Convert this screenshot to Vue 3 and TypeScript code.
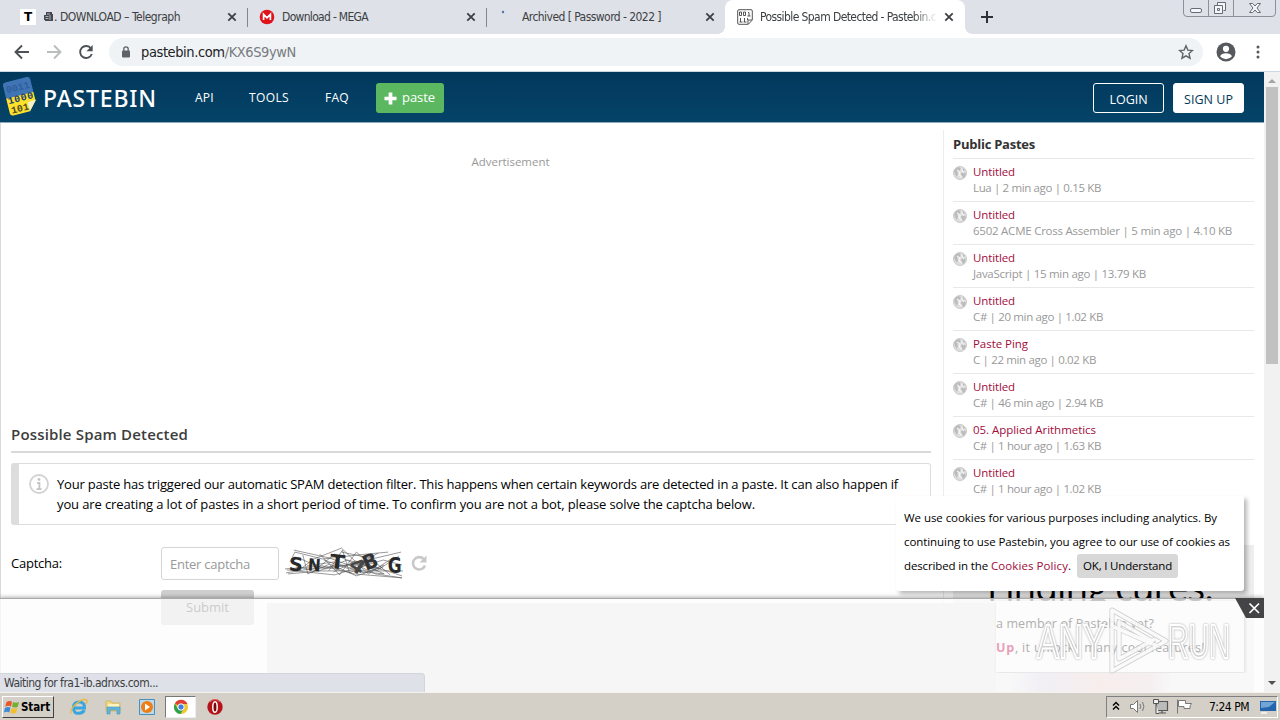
<script setup lang="ts">
interface Tab {
  kind: 'telegraph' | 'mega' | 'loading' | 'pastebin'
  title: string
  width: number
}

interface Paste {
  title: string
  titleWidth: number
  meta: string
  metaWidth: number
}

const tabs: Tab[] = [
  { kind: 'telegraph', title: '. DOWNLOAD – Telegraph', width: 126 },
  { kind: 'mega', title: 'Download - MEGA', width: 86 },
  { kind: 'loading', title: 'Archived [ Password - 2022 ]', width: 139 },
  { kind: 'pastebin', title: 'Possible Spam Detected - Pastebin.c', width: 176 },
]

const pastes: Paste[] = [
  { title: 'Untitled', titleWidth: 42, meta: 'Lua | 2 min ago | 0.15 KB', metaWidth: 128 },
  { title: 'Untitled', titleWidth: 42, meta: '6502 ACME Cross Assembler | 5 min ago | 4.10 KB', metaWidth: 259 },
  { title: 'Untitled', titleWidth: 42, meta: 'JavaScript | 15 min ago | 13.79 KB', metaWidth: 173 },
  { title: 'Untitled', titleWidth: 42, meta: 'C# | 20 min ago | 1.02 KB', metaWidth: 130 },
  { title: 'Paste Ping', titleWidth: 55, meta: 'C | 22 min ago | 0.02 KB', metaWidth: 123 },
  { title: 'Untitled', titleWidth: 42, meta: 'C# | 46 min ago | 2.94 KB', metaWidth: 130 },
  { title: '05. Applied Arithmetics', titleWidth: 123, meta: 'C# | 1 hour ago | 1.63 KB', metaWidth: 128 },
  { title: 'Untitled', titleWidth: 42, meta: 'C# | 1 hour ago | 1.02 KB', metaWidth: 128 },
]

// Tracks a single-line label so that it fills the given width.
const vFit = {
  mounted(el: HTMLElement, binding: { value: number }) {
    const count = (el.textContent ?? '').length
    const natural = el.getBoundingClientRect().width
    if (count > 0) el.style.letterSpacing = `${(binding.value - natural) / count}px`
  },
}
</script>

<template>
  <div class="screen">
    <div class="tabstrip">
      <div v-for="tab in tabs" :key="tab.kind" class="tab" :class="tab.kind">
        <span v-if="tab.kind === 'telegraph'" class="fav-t">T</span>
        <svg v-else-if="tab.kind === 'mega'" class="fav" viewBox="0 0 16 16">
          <circle cx="8" cy="8" r="7.3" fill="#e0131c" />
          <path d="M4.6 11V5.4L8 8.8l3.4-3.4V11" fill="none" stroke="#fff" stroke-width="1.7" />
        </svg>
        <svg v-else-if="tab.kind === 'loading'" class="fav" viewBox="0 0 16 16">
          <circle cx="8" cy="2" r="1.2" fill="#5571a8" />
        </svg>
        <svg v-else class="fav" viewBox="0 0 16 16">
          <path d="M2 .7h12q1.3 0 1.3 1.3v9l-4 4.3H2Q.7 15.3.7 14V2Q.7.7 2 .7ZM15 11h-4v4" fill="#fff" stroke="#555" stroke-width="1" />
          <path d="M2.5 3h2v3.500h-2zM6.500 3h2v3.500h-2zM11 3.500h1v3.500M10.500 7h3M3.500 9v4M2.500 13h3M7.500 9v4M6.500 13h3M10.500 9v2" fill="none" stroke="#444" stroke-width=".9" />
        </svg>
        <svg v-if="tab.kind === 'telegraph'" class="mini" viewBox="0 0 10 10">
          <path d="M2 0h6v2h1v7H1V8H0V3h2z" fill="#45494f" />
          <path d="M1.500 4.500h3M1.500 6.500h3M3 2h3M6 3v5" stroke="#c9cdd3" stroke-width=".8" />
        </svg>
        <span class="tab-title"><span v-fit="tab.width">{{ tab.title }}</span></span>
        <svg class="close" viewBox="0 0 10 10"><path d="M1.300 1.300l7.400 7.400M8.700 1.300L1.300 8.700" stroke="#3c4043" stroke-width="1.800" /></svg>
      </div>
      <svg class="new-tab" viewBox="0 0 12 12"><path d="M6 0v12M0 6h12" stroke="#2d3035" stroke-width="2" /></svg>
      <svg class="window-buttons" viewBox="0 0 94 18">
        <path d="M1.500 0v13q0 3.500 3.500 3.500h85q3.500 0 3.500-3.500V0M26.500 0v16.500M51.500 0v16.500" fill="none" stroke="#8b9099" />
        <rect x="8.500" y="8.500" width="11" height="4" rx="1.500" fill="#f5f6f8" stroke="#666b75" />
        <path d="M35.500 5.500v-3h8v8h-2M32.500 5.500h8v8h-8zM35.500 8.500h2v2h-2z" fill="#f5f6f8" stroke="#666b75" />
        <path d="M67.500 3.500h3.200L73 6l2.300-2.500h3.200L75 8l3.500 4.500h-3.200L73 10l-2.300 2.500h-3.200L71 8z" fill="#f5f6f8" stroke="#666b75" />
      </svg>
    </div>

    <div class="toolbar">
      <svg class="nav-icons" viewBox="0 0 100 37">
        <path d="M29 18H16M22 11.500L15.500 18l6.500 6.500" fill="none" stroke="#4d5156" stroke-width="1.900" />
        <path d="M47 18h13M54 11.500l6.500 6.500-6.500 6.500" fill="none" stroke="#babcbe" stroke-width="1.900" />
        <path d="M91 14.500A6 6 0 1 0 91.800 20" fill="none" stroke="#4d5156" stroke-width="1.900" />
        <path d="M92.700 11v6.300h-6.300z" fill="#4d5156" />
      </svg>
      <div class="address">
        <svg class="lock" viewBox="0 0 10 12"><rect x="1" y="4.500" width="8" height="7" rx="1" fill="#5f6368" /><path d="M2.800 5V3a2.200 2.200 0 0 1 4.400 0v2" fill="none" stroke="#5f6368" stroke-width="1.300" /></svg>
        <span v-fit="155" class="url">pastebin.com<span class="path">/KX6S9ywN</span></span>
        <svg class="star" viewBox="0 0 16 16"><path d="M8 1.800l1.850 4.300 4.650.4-3.500 3.100 1.050 4.600L8 11.800l-4.050 2.400L5 9.600 1.500 6.500l4.650-.4z" fill="none" stroke="#5f6368" stroke-width="1.400" /></svg>
      </div>
      <svg class="avatar" viewBox="0 0 20 20"><circle cx="10" cy="10" r="9.500" fill="#55585d" /><circle cx="10" cy="6.800" r="3.100" fill="#fff" /><path d="M4 14.300q1.500-3 6-3t6 3q-2.300 2.900-6 2.900t-6-2.900z" fill="#fff" /></svg>
      <svg class="kebab" viewBox="0 0 4 14"><circle cx="2" cy="2" r="1.500" /><circle cx="2" cy="7" r="1.500" /><circle cx="2" cy="12" r="1.500" /></svg>
    </div>

    <div class="viewport">
      <div class="page">
        <header class="site-header">
          <svg class="logo" viewBox="0 0 36 42">
            <g transform="rotate(-14 18 21)">
              <path d="M6 4h22q3 0 3 3v14H3V7q0-3 3-3z" fill="#3f74b5" />
              <path d="M3 20h28v9l-8 9H6q-3 0-3-3z" fill="#fde12d" />
              <path d="M31 29v-1l-8 1v9z" fill="#f4f1d2" />
              <text x="5" y="15" font-size="10" fill="#2f5f9c" textLength="24">0011</text>
              <text x="4" y="26" font-size="10" fill="#1d416d" textLength="26">1000</text>
              <text x="5" y="36" font-size="10" fill="#4f4c23" textLength="18">101</text>
            </g>
          </svg>
          <span class="brand"><span v-fit="114">PASTEBIN</span></span>
          <nav class="site-nav">
            <span class="api"><span v-fit="19">API</span></span>
            <span class="tools"><span v-fit="40">TOOLS</span></span>
            <span class="faq"><span v-fit="24">FAQ</span></span>
          </nav>
          <span class="paste-button">
            <svg viewBox="0 0 14 14"><path d="M7 .5v13M.5 7h13" stroke="#fff" stroke-width="4" /></svg>
            <span v-fit="33">paste</span>
          </span>
          <span class="account login"><span v-fit="38">LOGIN</span></span>
          <span class="account signup"><span v-fit="49">SIGN UP</span></span>
        </header>

        <div class="columns">
          <main class="content">
            <p class="ad-label"><span v-fit="78">Advertisement</span></p>
            <h1><span v-fit="177">Possible Spam Detected</span></h1>
            <div class="notice">
              <svg viewBox="0 0 20 20"><circle cx="10" cy="10" r="9" fill="none" stroke="#d2d2d2" stroke-width="1.800" /><circle cx="10" cy="5.500" r="1.400" fill="#c4c4c4" /><path d="M8 8.800h2.400v6M7.500 15.100h5" fill="none" stroke="#c4c4c4" stroke-width="1.800" /></svg>
              <div class="notice-text">
                <div><span v-fit="841">Your paste has triggered our automatic SPAM detection filter. This happens when certain keywords are detected in a paste. It can also happen if</span></div>
                <div><span v-fit="698">you are creating a lot of pastes in a short period of time. To confirm you are not a bot, please solve the captcha below.</span></div>
              </div>
            </div>
            <div class="captcha-row">
              <label><span v-fit="51">Captcha:</span></label>
              <div class="field"><span v-fit="80">Enter captcha</span></div>
              <svg class="captcha" viewBox="0 0 120 33">
                <g fill="none" stroke="#555" stroke-width=".6">
                  <path d="M0 22L38 19 70 27 118 31M1 26L25 22 62 18 117 5M5 15L10 5 38 12 72 8 104 5M9 3L45 11 80 24 119 24M2 23L50 28 99 13 118 18M13 24L29 12 57 1 84 27 110 10M18 8L23 27 45 17 72 29 99 20M35 7L55 28 72 5 92 24 115 9M44 24L58 3 65 26 90 14M57 5L86 11 106 28M11 20L34 24 63 13 103 24 118 29M27 26L50 7 91 27 118 31" />
                  <path d="M16 12L40 22 75 16 100 27M22 19L49 15 80 26 100 18M39 13L65 22 94 6M49 25L71 14 97 22M3 27L36 24 69 24 100 27" />
                </g>
                <g fill="#292929" font-weight="700">
                  <text x="4" y="24" font-size="19" textLength="14" lengthAdjust="spacingAndGlyphs" transform="rotate(5 11 18)">S</text>
                  <text x="23" y="24" font-size="17" textLength="13" lengthAdjust="spacingAndGlyphs" transform="rotate(4 29 18)">N</text>
                  <text x="45" y="22" font-size="20" textLength="15" lengthAdjust="spacingAndGlyphs" transform="rotate(6 53 18)">T</text>
                  <text x="66" y="25" font-size="20" textLength="15" lengthAdjust="spacingAndGlyphs" transform="rotate(34 72 18)" fill="#484848">4</text>
                  <text x="79" y="22" font-size="21" textLength="15" lengthAdjust="spacingAndGlyphs" transform="rotate(-22 86 16)" fill="#333">B</text>
                  <text x="103.500" y="26" font-size="21" textLength="14" lengthAdjust="spacingAndGlyphs">G</text>
                </g>
              </svg>
              <svg class="refresh" viewBox="0 0 16 16"><path d="M12.700 4A6.200 6.200 0 1 0 14 10.500" fill="none" stroke="#c9c9c9" stroke-width="2.600" /><path d="M15.500.5v7h-7z" fill="#c9c9c9" /></svg>
            </div>
            <div class="submit"><span v-fit="43">Submit</span></div>
          </main>

          <aside class="sidebar">
            <h2><span v-fit="82">Public Pastes</span></h2>
            <ul>
              <li v-for="(paste, index) in pastes" :key="index">
                <svg class="globe" viewBox="0 0 14 14"><circle cx="7" cy="7" r="6.500" fill="#dedede" stroke="#cacaca" /><path d="M3 2l3-1 2 2-1 2-3 1 1 2-1 3-2-3-1-3zM8 7l3-1 2 2-2 4-2-1zM10 2l2 2-2 1z" fill="#bcbcbc" /><path d="M4 4l3 2-1 3 3 2M8 3l3 4" stroke="#f6f6f6" stroke-width="1.200" fill="none" /></svg>
                <div>
                  <div class="paste-title"><span v-fit="paste.titleWidth">{{ paste.title }}</span></div>
                  <div class="paste-meta"><span v-fit="paste.metaWidth">{{ paste.meta }}</span></div>
                </div>
              </li>
            </ul>
            <div class="side-ad"><span v-fit="226">Finding cures.</span></div>
          </aside>
        </div>

        <div class="cookies">
          <div><span v-fit="313">We use cookies for various purposes including analytics. By</span></div>
          <div><span v-fit="326">continuing to use Pastebin, you agree to our use of cookies as</span></div>
          <div class="cookie-last">
            <span v-fit="84">described in the</span><span v-fit="77" class="policy">Cookies Policy</span><span>.</span>
            <span class="accept"><span v-fit="89">OK, I Understand</span></span>
          </div>
        </div>

        <div class="bottom-ad">
          <div class="ad-frame"></div>
          <div class="member">
            <div><span v-fit="158">a member of Pastebin yet?</span></div>
            <div><span v-fit="19" class="up">Up</span><span v-fit="190">, it unlocks many cool features!</span></div>
          </div>
          <div class="tint"></div>
          <svg class="ad-close" viewBox="0 0 29 20"><path d="M0 0h29v20H11z" fill="#444446" /><path d="M14.500 5.500l9.500 9.500M24 5.500L14.500 15" stroke="#fff" stroke-width="1.700" /></svg>
          <svg class="watermark" viewBox="0 0 204 70">
            <g font-size="48" class="mark-text">
              <text x="4" y="53" textLength="68" lengthAdjust="spacingAndGlyphs">ANY</text>
              <text x="135" y="53" textLength="62" lengthAdjust="spacingAndGlyphs">RUN</text>
            </g>
            <g fill="none" stroke-linejoin="round" class="mark-play">
              <path d="M79 5l54 31-54 30zM86 17v37l33-18zM79 21l45 20M86 54l36-20" stroke="#c4c4c4" stroke-width="5" />
              <path d="M79 5l54 31-54 30zM86 17v37l33-18zM79 21l45 20M86 54l36-20" stroke="#fafafa" stroke-width="3.600" />
            </g>
          </svg>
        </div>

        <div class="status"><span v-fit="154">Waiting for fra1-ib.adnxs.com...</span></div>
      </div>
      <div class="scrollbar">
        <svg viewBox="0 0 16 15"><path d="M4 11l4-4 4 4z" fill="#a3a3a3" /></svg>
        <div class="thumb"></div>
        <svg viewBox="0 0 16 18"><path d="M4 7h8l-4 4z" fill="#505050" /></svg>
      </div>
    </div>

    <div class="taskbar">
      <div class="start">
        <svg viewBox="0 0 16 16"><path d="M2.500 3q3-2 5.500-.2L7 7.500Q4.300 6 1.200 7.700z" fill="#e8562a" /><path d="M9 3q3 1.500 6-.1l-1.300 4.800Q11 9.400 8 7.800z" fill="#74ae32" /><path d="M1 9q3-1.900 5.500-.2L5.300 13.500Q3 12-.2 13.700z" fill="#3d8bd4" /><path d="M7.700 9q2.800 1.600 5.700.1l-1.300 4.700q-2.900 1.600-5.700 0z" fill="#f5be2b" /></svg>
        <span v-fit="29">Start</span>
      </div>
      <div class="quick">
        <svg viewBox="0 0 18 18"><path d="M3.500 10h11Q14.800 4 9 4T3.500 10t5.500 5.200q4 0 5.300-3" fill="none" stroke="#3aa6df" stroke-width="3" /><path d="M1 15.500Q-.5 12 6 6t10.500-4q1.500 1.500-1 4" fill="none" stroke="#e7b93c" stroke-width="1.300" /></svg>
        <svg viewBox="0 0 18 18"><path d="M2 3h5l1 2h8v8H2z" fill="#efd982" stroke="#c8ae56" stroke-width=".7" /><path d="M4 6h11v5H4z" fill="#fff4bd" /><path d="M3 16V9h13v7h-3v-4H6v4z" fill="#64b5dc" stroke="#4490b5" stroke-width=".6" /></svg>
        <svg viewBox="0 0 18 18"><path d="M1.500 1.500h15v15h-15z" fill="#bcd8ec" stroke="#4690bd" /><circle cx="9" cy="9" r="6" fill="#ef7d16" /><path d="M7 5.500l5 3.500-5 3.500z" fill="#fff" /></svg>
        <div class="running">
          <svg viewBox="0 0 18 18"><circle cx="9" cy="9" r="7" fill="#f2c62e" /><path d="M9 9L2.900 5.500A7 7 0 0 1 15.500 6H9z" fill="#df3f32" /><path d="M9 9L5.500 10.500 2.900 5.500A7 7 0 0 0 8.500 16l3-5z" fill="#2da14d" /><circle cx="9" cy="9" r="3.200" fill="#3f7ee5" stroke="#fff" /></svg>
        </div>
        <svg viewBox="0 0 18 18"><circle cx="9" cy="9" r="7.700" fill="#b61219" /><path d="M4 4q5-5 10 0" stroke="#e56b63" fill="none" /><ellipse cx="9" cy="9" rx="2.200" ry="5.300" fill="#7c070b" stroke="#fff" stroke-width="1.500" /></svg>
      </div>
      <div class="tray">
        <svg viewBox="0 0 88 20">
          <path d="M6 8.500l3-3 3 3M6 12.500l3-3 3 3" fill="none" stroke="#000" stroke-width="1.400" />
          <path d="M23.500 7.500h3l4-4v12l-4-4h-3z" fill="#fff" stroke="#777" /><path d="M33 7q1.500 2.500 0 5M35.500 5q2.800 4.500 0 9" fill="none" stroke="#777" />
          <path d="M49.500 4.500h11v9h-11zM51 16h8M55 14v2" fill="#bbb" stroke="#555" stroke-width="1.200" /><path d="M46.500 2.500h5v4h-5zM49 7v9.500h3" fill="#eee" stroke="#555" />
          <path d="M70.500 2.500v14M71.500 3.500h7v3h6q-2 2-1.500 5h-6v-2h-5.500z" fill="#fff" stroke="#777" />
        </svg>
        <span v-fit="40" class="clock">7:24 PM</span>
        <svg class="desktop" viewBox="0 0 16 16"><path d="M0 2h16v10H0z" fill="#2465ae" /><path d="M1 3h14L9 8 1 9z" fill="#70a5d6" /><path d="M1 14h6" stroke="#eee" stroke-width="2" /></svg>
      </div>
    </div>
  </div>
</template>

<style>
body {
  margin: 0;
  overflow: hidden;
}
</style>

<style scoped>
* {
  box-sizing: border-box;
}
.screen {
  width: 1280px;
  height: 720px;
  display: flex;
  flex-direction: column;
  overflow: hidden;
  position: relative;
  background: #fff;
  color: #000;
  font-family: "Open Sans", "Noto Sans", sans-serif;
  white-space: nowrap;
}
svg {
  display: block;
  flex: none;
}
.tabstrip {
  height: 34px;
  background: #dee1e7;
  display: flex;
  align-items: center;
  font: 12px/18px "DejaVu Sans Condensed", "DejaVu Sans", sans-serif;
  color: #3c4043;
}
.tab {
  width: 239px;
  height: 34px;
  display: flex;
  align-items: center;
  padding: 0 11px 0 12px;
  position: relative;
}
.tab.telegraph {
  width: 248px;
  padding-left: 20px;
}
.tab.loading {
  width: 238px;
  padding: 0 10px 0 8px;
}
.tab.telegraph::after,
.tab.mega::after {
  content: "";
  position: absolute;
  right: 0;
  top: 8px;
  width: 1px;
  height: 19px;
  background: #83878d;
}
.tab.pastebin {
  width: 240px;
  padding-left: 12px;
  background: #fff;
  border-radius: 8px 8px 0 0;
}
.tab.pastebin::before,
.tab.pastebin::after {
  content: "";
  position: absolute;
  bottom: 0;
  width: 7px;
  height: 7px;
}
.tab.pastebin::before {
  left: -7px;
  background: radial-gradient(circle at 0 0, transparent 6.5px, #fff 7px);
}
.tab.pastebin::after {
  right: -7px;
  background: radial-gradient(circle at 100% 0, transparent 6.5px, #fff 7px);
}
.fav,
.fav-t {
  width: 16px;
  height: 16px;
  margin-right: 7px;
  flex: none;
}
.mega .fav {
  margin-left: -1px;
}
.loading .fav {
  margin-right: 11px;
  margin-top: 1px;
}
.fav-t {
  background: #fff;
  font: 700 12px/16px "DejaVu Sans", sans-serif;
  color: #000;
  text-align: center;
  margin-right: 8px;
}
.mini {
  width: 10px;
  height: 10px;
}
.tab-title {
  flex: 1;
  overflow: hidden;
}
.pastebin .tab-title {
  mask-image: linear-gradient(90deg, #000 153px, transparent 177px);
}
.close {
  width: 10px;
  height: 10px;
}
.new-tab {
  width: 12px;
  height: 12px;
  margin-left: 16px;
}
.window-buttons {
  width: 94px;
  height: 18px;
  align-self: flex-start;
  margin-left: 189px;
}
.toolbar {
  height: 38px;
  display: flex;
  align-items: flex-start;
  border-bottom: 1px solid #c9d8e2;
}
.nav-icons {
  width: 100px;
  height: 37px;
}
.address {
  width: 1094px;
  height: 28px;
  margin: 4px 0 0 9px;
  border-radius: 14px;
  background: #f0f3f6;
  display: flex;
  align-items: center;
  padding: 0 9px 0 12px;
}
.lock {
  width: 10px;
  height: 12px;
  margin-right: 10px;
}
.url {
  font: 14.5px/20px "DejaVu Sans Condensed", "DejaVu Sans", sans-serif;
  color: #202124;
}
.path {
  color: #777b7f;
}
.star {
  width: 16px;
  height: 16px;
  margin-left: auto;
}
.avatar {
  width: 20px;
  height: 20px;
  margin: 8px 0 0 13px;
}
.kebab {
  width: 4px;
  height: 14px;
  margin: 11px 0 0 20px;
  fill: #55585d;
}
.viewport {
  height: 620px;
  display: flex;
}
.page {
  width: 1264px;
  height: 620px;
  position: relative;
  overflow: hidden;
}
.site-header {
  height: 51px;
  background: linear-gradient(#02385c, #044468);
  border-bottom: 1px solid #8caabc;
  display: flex;
  align-items: flex-start;
  padding-top: 11px;
  color: #fff;
  font-size: 12px;
  line-height: 30px;
}
.logo {
  width: 36px;
  height: 42px;
  margin: -8px 4px 0 3px;
  font-family: "Liberation Mono", monospace;
  font-weight: 700;
}
.brand {
  width: 152px;
  font: 500 23px/30px "Noto Sans", sans-serif;
}
.site-nav {
  display: flex;
  width: 181px;
}
.api {
  width: 54px;
}
.tools {
  width: 76px;
}
.paste-button {
  width: 68px;
  height: 30px;
  border-radius: 3px;
  background: #5cb860;
  display: flex;
  align-items: center;
  gap: 5px;
  padding-left: 8px;
  font-size: 13px;
  line-height: 28px;
}
.paste-button > span {
  margin-top: -2px;
}
.paste-button svg {
  width: 13px;
  height: 13px;
}
.account {
  width: 71px;
  height: 30px;
  border: 1px solid #fff;
  border-radius: 3px;
  text-align: center;
  font-size: 12.5px;
  line-height: 31px;
}
.login {
  margin-left: auto;
  margin-right: 9px;
}
.signup {
  margin-right: 20px;
  background: #fff;
  color: #023859;
}
.columns {
  height: 569px;
  display: flex;
  border-left: 1px solid #d9d9d9;
}
.content {
  width: 930px;
  padding: 30px 0 0 10px;
}
.ad-label {
  height: 269px;
  margin: 0;
  padding-left: 79px;
  text-align: center;
  font-size: 11.5px;
  line-height: 18px;
  color: #999;
}
h1 {
  height: 31px;
  margin: 0 0 10px;
  border-bottom: 2px solid #d9d9d9;
  font-size: 15px;
  line-height: 24px;
  font-weight: 600;
  color: #3d3d3d;
}
.notice {
  height: 62px;
  border: 1px solid #ddd;
  border-left: 8px solid #ddd;
  border-radius: 3px;
  display: flex;
  padding: 10px 0 0 10px;
  font-size: 13px;
  line-height: 20px;
}
.notice svg {
  width: 20px;
  height: 20px;
  margin: 0 8px 0 0;
}
.captcha-row {
  height: 33px;
  margin-top: 22px;
  display: flex;
}
.captcha-row label {
  width: 150px;
  font-size: 13px;
  line-height: 33px;
}
.field {
  width: 118px;
  height: 33px;
  border: 1px solid #d4d4d4;
  border-radius: 3px;
  padding-left: 8px;
  font-size: 13px;
  line-height: 33px;
  color: #999;
}
.captcha {
  width: 119px;
  height: 33px;
  margin-left: 6px;
  overflow: visible;
  font-family: "DejaVu Sans", sans-serif;
}
.refresh {
  width: 16px;
  height: 16px;
  margin: 8px 0 0 7px;
}
.submit {
  width: 93px;
  height: 35px;
  margin: 10px 0 0 150px;
  border-radius: 3px;
  background: #cfcfcf;
  text-align: center;
  font-size: 13px;
  line-height: 35px;
  color: #222;
}
.sidebar {
  width: 311px;
  height: 562px;
  margin: 7px 0 0 12px;
  padding-left: 9px;
  border-left: 1px solid #ececec;
}
h2 {
  height: 28px;
  margin: 0;
  font-size: 13px;
  font-weight: 700;
  line-height: 29px;
  color: #333;
}
ul {
  list-style: none;
  padding: 0;
  margin: 0;
}
li {
  height: 43px;
  border-top: 1px solid #e8e8e8;
  display: flex;
  padding-top: 5px;
  font-size: 11.5px;
  line-height: 16px;
}
.globe {
  width: 14px;
  height: 14px;
  margin: 2px 6px 0 0;
}
.paste-title {
  color: #a10c3c;
}
.paste-meta {
  color: #999;
}
.side-ad {
  height: 160px;
  margin-top: 43px;
  background: #eee;
  padding-left: 34px;
  font: 400 37px/83px "Open Sans", sans-serif;
  color: #000;
}
.cookies {
  position: absolute;
  left: 896px;
  top: 424px;
  width: 348px;
  height: 95px;
  padding: 10px 0 0 8px;
  border-radius: 0 0 3px 3px;
  background: #fff;
  box-shadow: 3px 3px 4px rgba(0, 0, 0, 0.28);
  font-size: 11.5px;
  line-height: 24px;
}
.cookie-last {
  display: flex;
}
.policy {
  margin-left: 3px;
  color: #a10c3c;
}
.accept {
  height: 24px;
  width: 101px;
  margin-left: 6px;
  padding-left: 6px;
  border-radius: 3px;
  background: #d8d8d8;
}
.bottom-ad {
  position: absolute;
  left: 0;
  top: 526px;
  width: 1264px;
  height: 94px;
  background: rgba(252, 252, 252, 0.77);
  border-top: 1px solid #aaa;
  box-shadow: 0 -1px 4px rgba(0, 0, 0, 0.3);
}
.ad-frame {
  position: absolute;
  left: 267px;
  top: 4px;
  width: 729px;
  height: 90px;
  background: #f6f6f6;
}
.member {
  position: absolute;
  left: 996px;
  top: 2px;
  width: 248px;
  height: 71px;
  padding-top: 11px;
  background: #fcfcfc;
  box-shadow: 1px 1px 3px #ddd;
  font-size: 12.5px;
  line-height: 24px;
  color: #b0b0b0;
}
.up {
  font-weight: 700;
  color: #e8a0b8;
}
.tint {
  position: absolute;
  left: 996px;
  top: 74px;
  width: 258px;
  height: 20px;
  background: linear-gradient(90deg, #f8f8f8 5%, #f1eff5 18%, #f7eeec 40%, #f5eff0 60%, #f8f8f8 68%);
}
.ad-close {
  position: absolute;
  left: 1235px;
  top: -1px;
  width: 29px;
  height: 20px;
}
.watermark {
  position: absolute;
  left: 1033px;
  top: 6px;
  width: 204px;
  height: 70px;
  font-family: "Liberation Sans", sans-serif;
}
.mark-text {
  fill: rgba(235, 235, 235, 0.45);
  stroke: #fff;
  stroke-width: 2px;
  filter: drop-shadow(0 0 1px #aaa);
}
.mark-play {
  opacity: 0.85;
}
.status {
  position: absolute;
  left: 0;
  bottom: 0;
  width: 425px;
  height: 19px;
  padding-left: 4px;
  border: 1px solid #d2d6dc;
  border-left: 0;
  border-bottom: 0;
  border-radius: 0 4px 0 0;
  background: #dee1e7;
  font: 12px/19px "DejaVu Sans Condensed", "DejaVu Sans", sans-serif;
  color: #3c4043;
}
.scrollbar {
  width: 16px;
  height: 620px;
  display: flex;
  flex-direction: column;
  background: #f1f1f1;
}
.thumb {
  width: 12px;
  height: 277px;
  margin: 0 2px auto;
  background: #c1c1c1;
}
.taskbar {
  height: 28px;
  display: flex;
  align-items: center;
  padding-top: 1px;
  background: #d4cfc7;
  border-top: 1px solid #f4f2ee;
  font: 12px/18px "DejaVu Sans Condensed", "DejaVu Sans", sans-serif;
}
.start {
  width: 52px;
  height: 22px;
  margin-left: 2px;
  display: flex;
  align-items: center;
  gap: 1px;
  padding-left: 1px;
  border: 1px solid #fff;
  border-right-color: #404040;
  border-bottom-color: #404040;
  font-size: 11.5px;
  font-weight: 700;
}
.start svg {
  width: 16px;
  height: 16px;
}
.quick {
  display: flex;
  align-items: center;
  margin-left: 16px;
  gap: 16px;
}
.quick svg {
  width: 18px;
  height: 18px;
}
.running {
  width: 31px;
  height: 22px;
  margin: 0 -6px 0 -7px;
  display: grid;
  place-items: center;
  background: #fff;
  border: 1px solid #777;
  border-right-color: #eee;
  border-bottom-color: #eee;
}
.tray {
  height: 22px;
  width: 172px;
  margin-left: auto;
  margin-right: 2px;
  display: flex;
  align-items: center;
  border: 1px solid #808080;
  border-right-color: #fff;
  border-bottom-color: #fff;
}
.tray svg {
  width: 88px;
  height: 20px;
}
.clock {
  margin-left: 14px;
}
.tray .desktop {
  width: 16px;
  height: 16px;
  margin-left: 11px;
}
</style>
